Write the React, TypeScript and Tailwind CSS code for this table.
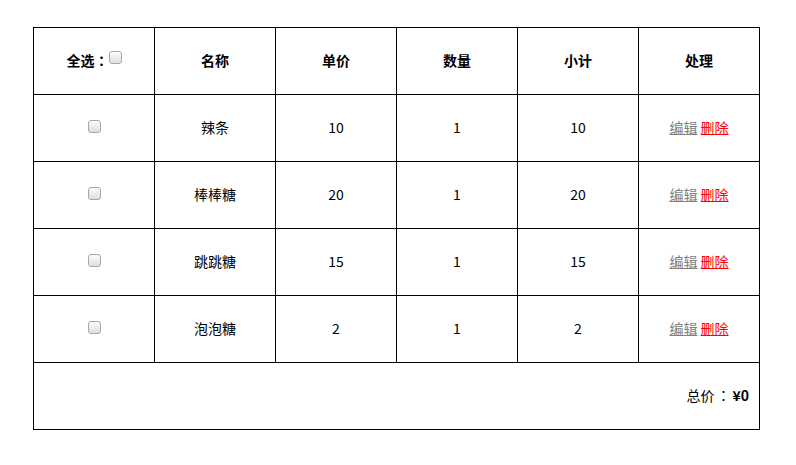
import React from 'react'

const items = [
  { name: '辣条', price: 10, count: 1 },
  { name: '棒棒糖', price: 20, count: 1 },
  { name: '跳跳糖', price: 15, count: 1 },
  { name: '泡泡糖', price: 2, count: 1 },
]

function Box({ className = '' }: { className?: string }) {
  return (
    <span
      className={`inline-block w-[13px] h-[13px] rounded-[3px] border border-[#a8a8a8] bg-gradient-to-b from-[#fcfcfc] to-[#dedede] ${className}`}
    />
  )
}

// centered full-width colon, like the YaHei one in the shot
function Colon({ className = '' }: { className?: string }) {
  return (
    <span className={`inline-block text-center font-['Noto_Sans_CJK_TC',sans-serif] ${className}`}>：</span>
  )
}

export default function App() {
  return (
    <div className="w-[796px] h-[465px] bg-white pt-[27px] pl-[33px] font-['Noto_Sans_CJK_SC','Microsoft_YaHei',sans-serif] text-[14px] text-black">
      <table className="border-collapse w-[727px] table-fixed">
        <thead>
          <tr className="h-[67px]">
            <th className="border border-black font-bold pb-[2px]">
              <span className="inline-flex items-start">
                全选<Colon className="w-[14px]" />
                <Box className="mt-[1px]" />
              </span>
            </th>
            <th className="border border-black font-bold pb-[2px]">名称</th>
            <th className="border border-black font-bold pb-[2px]">单价</th>
            <th className="border border-black font-bold pb-[2px]">数量</th>
            <th className="border border-black font-bold pb-[2px]">小计</th>
            <th className="border border-black font-bold pb-[2px]">处理</th>
          </tr>
        </thead>
        <tbody>
          {items.map((it) => (
            <tr key={it.name} className="h-[67px] text-center">
              <td className="border border-black">
                <Box className="mt-[-6px] align-middle" />
              </td>
              <td className="border border-black pb-[2px]">{it.name}</td>
              <td className="border border-black pb-[2px]">{it.price}</td>
              <td className="border border-black pb-[2px]">{it.count}</td>
              <td className="border border-black pb-[2px]">{it.price * it.count}</td>
              <td className="border border-black pb-[2px]">
                <a className="text-[#808080] underline cursor-pointer">编辑</a>{' '}
                <a className="text-[#ff0000] underline cursor-pointer">删除</a>
              </td>
            </tr>
          ))}
        </tbody>
        <tfoot>
          <tr className="h-[67px]">
            <td colSpan={6} className="border border-black text-right pr-[10px] pb-[2px]">
              总价<Colon className="w-[18px]" />
              <b>¥0</b>
            </td>
          </tr>
        </tfoot>
      </table>
    </div>
  )
}
